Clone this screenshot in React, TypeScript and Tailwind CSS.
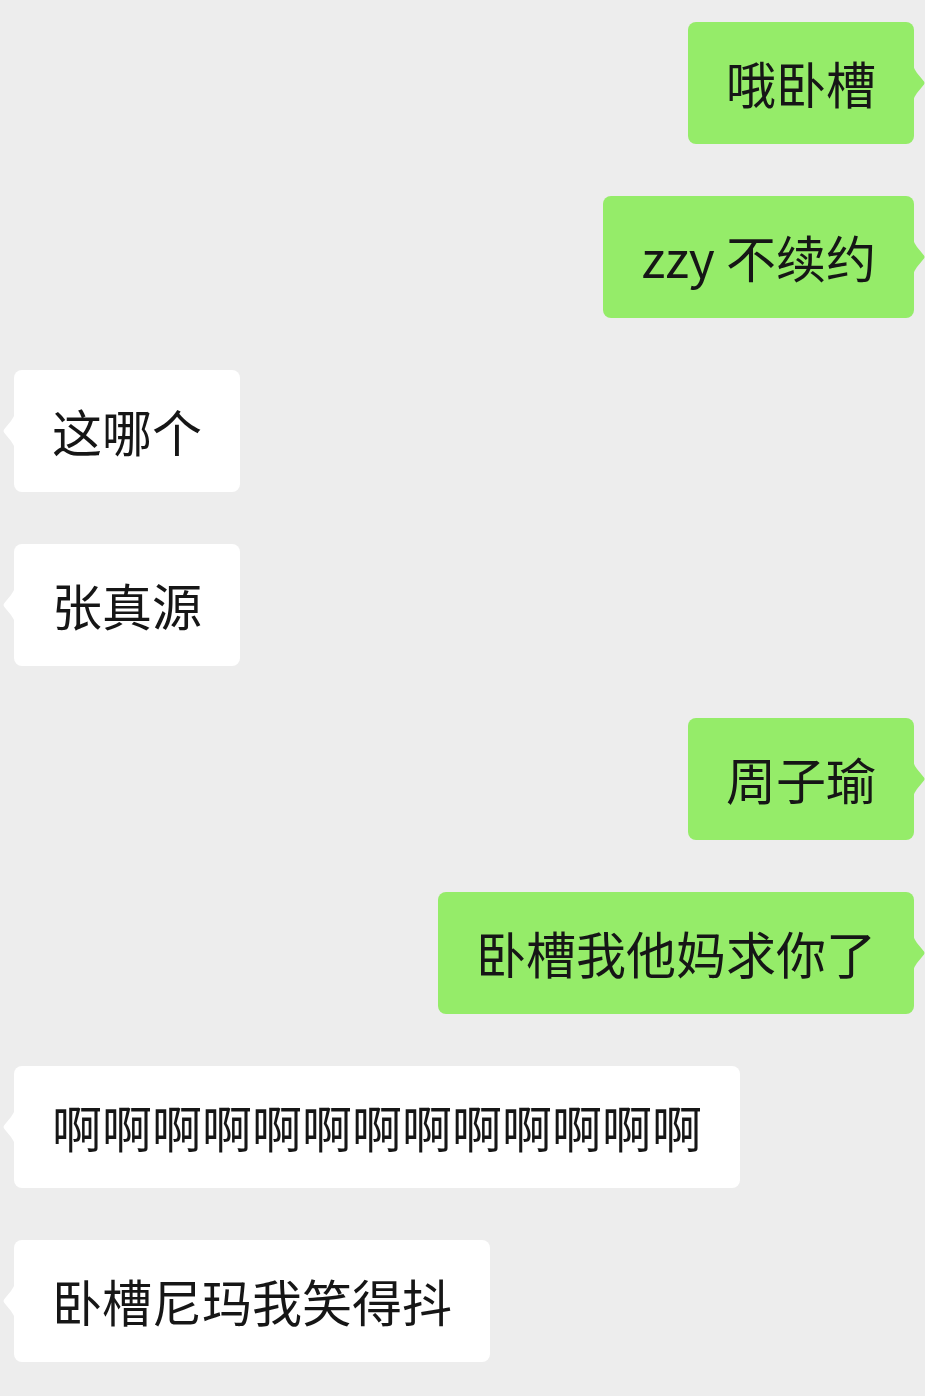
import React from "react";

type Msg = { text: string; mine: boolean };

const msgs: Msg[] = [
  { text: "哦卧槽", mine: true },
  { text: "zzy 不续约", mine: true },
  { text: "这哪个", mine: false },
  { text: "张真源", mine: false },
  { text: "周子瑜", mine: true },
  { text: "卧槽我他妈求你了", mine: true },
  { text: "啊啊啊啊啊啊啊啊啊啊啊啊啊", mine: false },
  { text: "卧槽尼玛我笑得抖", mine: false },
];

function Bubble({ text, mine }: Msg) {
  return (
    <div className={mine ? "flex justify-end pr-[11px]" : "flex justify-start pl-[14px]"}>
      <div
        className={
          "relative rounded-[8px] px-[38px] pt-[25px] pb-[27px] text-[50px] leading-[70px] text-[#161616] whitespace-pre " +
          (mine ? "bg-[#95ec69]" : "bg-white")
        }
      >
        {text}
        {mine ? (
          <svg
            className="absolute right-[-11px] top-1/2 -translate-y-1/2"
            width="12"
            height="36"
            viewBox="0 0 12 36"
          >
            <path d="M0 0 Q1 4 4 8 L11 16.5 Q12 18 11 19.5 L4 28 Q1 32 0 36 Z" fill="#95ec69" />
          </svg>
        ) : (
          <svg
            className="absolute left-[-11px] top-1/2 -translate-y-1/2"
            width="12"
            height="36"
            viewBox="0 0 12 36"
          >
            <path d="M12 0 Q11 4 8 8 L1 16.5 Q0 18 1 19.5 L8 28 Q11 32 12 36 Z" fill="#ffffff" />
          </svg>
        )}
      </div>
    </div>
  );
}

export default function App() {
  return (
    <div
      className="w-[925px] h-[1396px] bg-[#ededed] pt-[22px] flex flex-col gap-[52px] overflow-hidden"
      style={{ fontFamily: '"Noto Sans CJK SC", "Noto Sans", sans-serif' }}
    >
      {msgs.map((m, i) => (
        <Bubble key={i} {...m} />
      ))}
    </div>
  );
}
